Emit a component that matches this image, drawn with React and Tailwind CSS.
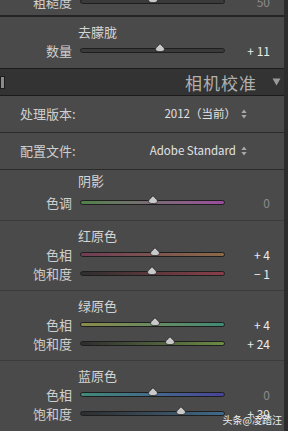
import React from "react";

const font = { fontFamily: '"Noto Sans CJK SC", "Noto Sans", sans-serif' };

function Thumb() {
  return (
    <svg width="10" height="9" viewBox="0 0 10 9" className="block">
      <path
        d="M5 0.5 C6.5 3 9.5 4.2 9.5 6.3 C9.5 8 7.5 8.6 5 8.6 C2.5 8.6 0.5 8 0.5 6.3 C0.5 4.2 3.5 3 5 0.5 Z"
        fill="#c9c9c9"
        stroke="#2a2a2a"
        strokeWidth="0.8"
      />
    </svg>
  );
}

function Slider({ value, track }) {
  const pct = ((value + 100) / 200) * 100;
  return (
    <div className="relative w-[145px] h-[5px]">
      <div className={`h-[5px] w-full rounded-full border border-[#1e1e1e] ${track}`} />
      <div
        className="absolute top-[-5px] -translate-x-1/2"
        style={{ left: `${pct}%` }}
      >
        <Thumb />
      </div>
    </div>
  );
}

function Row({ label, value, shown, dim, track }) {
  return (
    <div className="flex items-center h-[19px]">
      <div className="w-[72px] text-right text-[13px] text-[#cfcfcf] leading-none">{label}</div>
      <div className="ml-[8px]">
        <Slider value={value} track={track} />
      </div>
      <div
        className={`w-[45px] text-right text-[12px] leading-none ${dim ? "text-[#8a8a8a]" : "text-[#ececec]"}`}
      >
        {shown}
      </div>
    </div>
  );
}

function Title({ children }) {
  return (
    <div className="h-[20px] flex items-center pl-[78px] text-[13px] text-[#d4d4d4] leading-none">
      {children}
    </div>
  );
}

function UpDown() {
  return (
    <svg width="6" height="10" viewBox="0 0 6 10" className="ml-[5px]">
      <path d="M3 0.5 L5.6 4 H0.4 Z" fill="#a8a8a8" />
      <path d="M3 9.5 L5.6 6 H0.4 Z" fill="#a8a8a8" />
    </svg>
  );
}

const groups = [
  {
    title: "红原色",
    rows: [
      { label: "色相", value: 4, shown: "+ 4", track: "bg-linear-to-r from-[#6e3d55] to-[#8a6a48]" },
      { label: "饱和度", value: -1, shown: "− 1", track: "bg-linear-to-r from-[#2e2e2e] to-[#8a3e4a]" },
    ],
  },
  {
    title: "绿原色",
    rows: [
      { label: "色相", value: 4, shown: "+ 4", track: "bg-linear-to-r from-[#8a8a48] to-[#3f8a76]" },
      { label: "饱和度", value: 24, shown: "+ 24", track: "bg-linear-to-r from-[#2e2e2e] to-[#6c8c44]" },
    ],
  },
  {
    title: "蓝原色",
    rows: [
      { label: "色相", value: 0, shown: "0", dim: true, track: "bg-linear-to-r from-[#3f8a76] to-[#48429a]" },
      { label: "饱和度", value: 39, shown: "+ 39", track: "bg-linear-to-r from-[#2e2e2e] to-[#3f6a8a]" },
    ],
  },
];

export default function App() {
  return (
    <div className="w-[288px] h-[431px] overflow-hidden flex bg-[#4a4a4a]" style={font}>
      <div className="w-[284px] flex flex-col">
        {/* cut-off slider row */}
        <div className="h-[17px] overflow-hidden border-b-2 border-[#242424]">
          <div className="mt-[-8px]">
            <Row label="粗糙度" value={0} shown="50" dim track="bg-linear-to-r from-[#3a3a3a] to-[#3a3a3a]" />
          </div>
        </div>

        {/* dehaze */}
        <div className="pt-[4px] h-[51px]">
          <Title>去朦胧</Title>
          <Row label="数量" value={11} shown="+ 11" track="bg-linear-to-r from-[#3a3a3a] to-[#3a3a3a]" />
        </div>

        {/* section header */}
        <div className="h-[28px] flex items-center bg-[#333333] border-y border-[#1c1c1c]">
          <div className="w-[5px] h-[13px] bg-[#8a8a8a] border border-[#1c1c1c]" />
          <div className="ml-auto text-[17px] text-[#b0b0b0] leading-none tracking-[1px]">相机校准</div>
          <svg width="9" height="8" viewBox="0 0 9 8" className="ml-[15px] mr-[3px]">
            <path d="M0.5 0.5 H8.5 L4.5 7.5 Z" fill="#9a9a9a" />
          </svg>
        </div>

        {/* dropdowns */}
        <div className="h-[37px] flex items-center px-[20px] border-b border-[#2a2a2a]">
          <div className="text-[13px] text-[#cfcfcf]">处理版本:</div>
          <div className="ml-auto flex items-center text-[11.5px] text-[#e2e2e2] mr-[17px]">
            2012（当前）
            <UpDown />
          </div>
        </div>
        <div className="h-[37px] flex items-center px-[20px] border-b border-[#2a2a2a]">
          <div className="text-[13px] text-[#cfcfcf]">配置文件:</div>
          <div className="ml-auto flex items-center text-[11.5px] text-[#e2e2e2] mr-[17px]">
            Adobe Standard
            <UpDown />
          </div>
        </div>

        {/* shadows */}
        <div className="pb-[8px] border-b border-[#3b3b3b]">
          <Title>阴影</Title>
          <div className="mt-[3px]">
            <Row label="色调" value={0} shown="0" dim track="bg-linear-to-r from-[#4f8048] to-[#9a4a9c]" />
          </div>
        </div>

        {groups.map((g, i) => (
          <div
            key={g.title}
            className={`pt-[4px] pb-[7px] ${i < groups.length - 1 ? "border-b border-[#3b3b3b]" : ""}`}
          >
            <Title>{g.title}</Title>
            {g.rows.map((r) => (
              <Row key={r.label} {...r} />
            ))}
          </div>
        ))}
      </div>
      <div className="relative w-[4px] bg-[#2c2c2c]">
        <div className="absolute right-[6px] bottom-[6px] whitespace-nowrap text-[10px] text-[#f0f0f0] leading-none">
          头条@凌踏汪
        </div>
      </div>
    </div>
  );
}
